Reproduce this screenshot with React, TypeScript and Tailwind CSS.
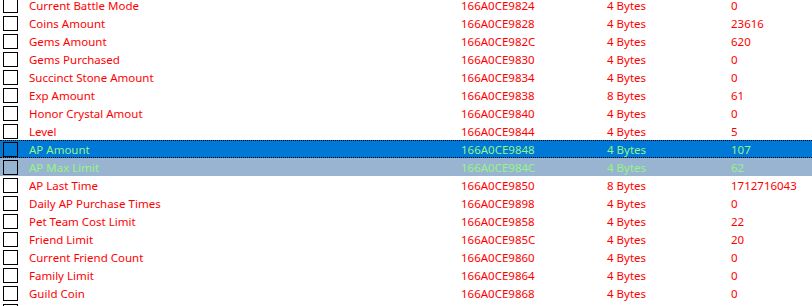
const rows: [string, string, string, string][] = [
  ['Current Battle Mode', '166A0CE9824', '4 Bytes', '0'],
  ['Coins Amount', '166A0CE9828', '4 Bytes', '23616'],
  ['Gems Amount', '166A0CE982C', '4 Bytes', '620'],
  ['Gems Purchased', '166A0CE9830', '4 Bytes', '0'],
  ['Succinct Stone Amount', '166A0CE9834', '4 Bytes', '0'],
  ['Exp Amount', '166A0CE9838', '8 Bytes', '61'],
  ['Honor Crystal Amout', '166A0CE9840', '4 Bytes', '0'],
  ['Level', '166A0CE9844', '4 Bytes', '5'],
  ['AP Amount', '166A0CE9848', '4 Bytes', '107'],
  ['AP Max Limit', '166A0CE984C', '4 Bytes', '62'],
  ['AP Last Time', '166A0CE9850', '8 Bytes', '1712716043'],
  ['Daily AP Purchase Times', '166A0CE9898', '4 Bytes', '0'],
  ['Pet Team Cost Limit', '166A0CE9858', '4 Bytes', '22'],
  ['Friend Limit', '166A0CE985C', '4 Bytes', '20'],
  ['Current Friend Count', '166A0CE9860', '4 Bytes', '0'],
  ['Family Limit', '166A0CE9864', '4 Bytes', '0'],
  ['Guild Coin', '166A0CE9868', '4 Bytes', '0'],
];

export default function App() {
  return (
    <div className="h-[306px] w-[812px] overflow-hidden bg-white text-[11.5px] leading-none" style={{ fontFamily: '"Noto Sans", sans-serif' }}>
      <div className="mt-[-4px] flex flex-col">
        {rows.map(([desc, addr, type, val], i) => {
          const selected = i === 8;
          const inactive = i === 9;
          const bg = selected
            ? 'bg-[#0078d7] border-y border-dotted border-black'
            : inactive
              ? 'bg-[#99b4d1]'
              : 'bg-white';
          const txt = selected || inactive ? 'text-[#94f584]' : 'text-[#ff0000]';
          return (
            <div key={i} className={`flex h-[18px] items-center ${bg} ${txt}`}>
              <div className="ml-[3px] h-[15px] w-[15px] shrink-0 border border-black" />
              <div className="ml-[11px] w-[432px] shrink-0 whitespace-nowrap pt-[2px]">{desc}</div>
              <div className="w-[146px] shrink-0 pt-[2px]">{addr}</div>
              <div className="w-[124px] shrink-0 pt-[2px]">{type}</div>
              <div className="flex-1 pt-[2px]">{val}</div>
            </div>
          );
        })}
        {/* next row, only its checkbox top is visible */}
        <div className="flex h-[18px] items-center bg-white">
          <div className="ml-[3px] h-[15px] w-[15px] shrink-0 border border-black" />
        </div>
      </div>
    </div>
  );
}
